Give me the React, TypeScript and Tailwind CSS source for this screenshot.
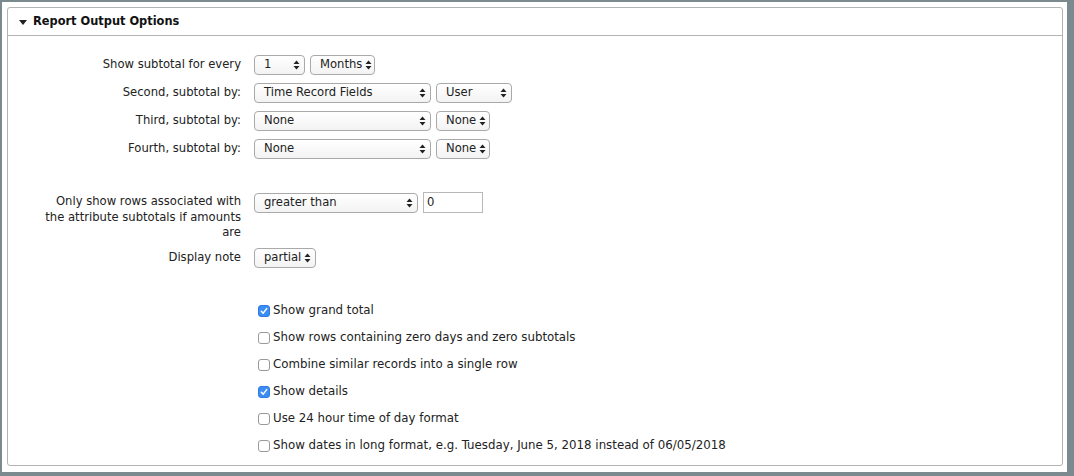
import React from "react";

function Arrows() {
  return (
    <svg width="7" height="10" viewBox="0 0 7 10" className="shrink-0">
      <path d="M3.5 0.5 L6.5 4 L0.5 4 Z" fill="#222" />
      <path d="M3.5 9.5 L6.5 6 L0.5 6 Z" fill="#222" />
    </svg>
  );
}

function Select({ value, width }: { value: string; width: string }) {
  return (
    <div
      className={`${width} h-[20px] flex items-center justify-between gap-[3px] pl-[9px] pr-[4px] border border-[#a9a9a9] rounded-[4px] bg-gradient-to-b from-white to-[#f3f3f3] text-[11.6px] text-[#222] shrink-0`}
    >
      <span className="whitespace-nowrap">{value}</span>
      <Arrows />
    </div>
  );
}

function Checkbox({ checked }: { checked: boolean }) {
  if (checked) {
    return (
      <span className="w-[12px] h-[12px] ml-[4px] mr-[3px] rounded-[3px] bg-[#3b8df5] border border-[#2f7be0] flex items-center justify-center shrink-0">
        <svg width="8" height="8" viewBox="0 0 8 8">
          <path d="M1.3 4.2 L3.2 6.1 L6.7 1.6" stroke="white" strokeWidth="1.5" fill="none" strokeLinecap="round" strokeLinejoin="round" />
        </svg>
      </span>
    );
  }
  return <span className="w-[12px] h-[12px] ml-[4px] mr-[3px] rounded-[3px] bg-white border border-[#9a9a9a] shrink-0" />;
}

function Row({ label, children }: { label: string; children: React.ReactNode }) {
  return (
    <div className="flex items-center gap-[13px]">
      <div className="w-[233px] text-right text-[11.6px] text-[#222] shrink-0">{label}</div>
      <div className="flex items-center gap-[5px]">{children}</div>
    </div>
  );
}

const checks: [boolean, string][] = [
  [true, "Show grand total"],
  [false, "Show rows containing zero days and zero subtotals"],
  [false, "Combine similar records into a single row"],
  [true, "Show details"],
  [false, "Use 24 hour time of day format"],
  [false, "Show dates in long format, e.g. Tuesday, June 5, 2018 instead of 06/05/2018"],
];

export default function App() {
  return (
    <div className="w-[1074px] h-[476px] bg-[#7b8a8e] pt-[2px] pl-[2px] pr-[7px] pb-[4px] font-['DejaVu_Sans',Verdana,sans-serif]">
      <div className="h-full bg-white pt-[5px] pl-[5px] pr-[4px] pb-[6px]">
        <div className="h-full border border-[#b3b3b3] rounded-[3px] flex flex-col">
          <div className="h-[28px] border-b border-[#b3b3b3] flex items-center pl-[11px] pt-[1px] gap-[6px]">
            <svg width="8" height="5" viewBox="0 0 8 5">
              <path d="M0 0 L8 0 L4 5 Z" fill="#222" />
            </svg>
            <span className="text-[11.4px] font-bold text-[#111]">Report Output Options</span>
          </div>
          <div className="flex flex-col pt-[19px]">
            <div className="flex flex-col gap-[8px]">
              <Row label="Show subtotal for every">
                <Select value="1" width="w-[51px]" />
                <Select value="Months" width="w-[65px]" />
              </Row>
              <Row label="Second, subtotal by:">
                <Select value="Time Record Fields" width="w-[177px]" />
                <Select value="User" width="w-[76px]" />
              </Row>
              <Row label="Third, subtotal by:">
                <Select value="None" width="w-[177px]" />
                <Select value="None" width="w-[54px]" />
              </Row>
              <Row label="Fourth, subtotal by:">
                <Select value="None" width="w-[177px]" />
                <Select value="None" width="w-[54px]" />
              </Row>
            </div>
            <div className="flex items-start gap-[13px] mt-[33px]">
              <div className="w-[233px] text-right text-[11.6px] leading-[15.5px] text-[#222] pt-[2px] pl-[36px] shrink-0">
                Only show rows associated with the attribute subtotals if amounts are
              </div>
              <div className="flex items-center gap-[5px]">
                <Select value="greater than" width="w-[164px]" />
                <div className="w-[60px] h-[21px] border border-[#b8b8b8] bg-white text-[11.6px] text-[#222] flex items-center pl-[3px]">0</div>
              </div>
            </div>
            <div className="mt-[7px]">
              <Row label="Display note">
                <Select value="partial" width="w-[62px]" />
              </Row>
            </div>
            <div className="flex flex-col gap-[12px] mt-[36px] pl-[246px]">
              {checks.map(([c, t]) => (
                <div key={t} className="flex items-center h-[15px] text-[11.8px] text-[#222]">
                  <Checkbox checked={c} />
                  <span>{t}</span>
                </div>
              ))}
            </div>
          </div>
        </div>
      </div>
    </div>
  );
}
